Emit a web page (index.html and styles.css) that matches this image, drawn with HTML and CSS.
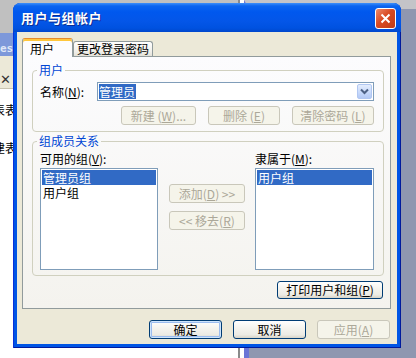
FILE: index.html
```html
<!DOCTYPE html>
<html lang="zh-CN">
<head>
    <meta charset="UTF-8">
    <title>用户与组帐户</title>
    <link rel="stylesheet" href="styles.css">
</head>
<body>
    <!-- 背后的程序窗口和桌面 -->
    <div class="backdrop">
        <div class="app">
            <div class="app-top"></div>
            <div class="app-title">ess:</div>
            <div class="app-tools"><span class="tool-x">✕</span></div>
            <div class="app-content">
                <div class="app-line">表表</div>
                <div class="app-line second">建表</div>
            </div>
        </div>
        <div class="app-gap"></div>
        <div class="desk"></div>
    </div>

    <div class="dialog">
        <div class="titlebar">
            <span class="title">用户与组帐户</span>
            <span class="close">
                <svg width="11" height="11" viewBox="0 0 11 11"><path d="M1.5 1.5 L9.5 9.5 M9.5 1.5 L1.5 9.5" stroke="#fff" stroke-width="2" fill="none"/></svg>
            </span>
        </div>

        <div class="dialog-body">
            <div class="tabs">
                <div class="tab active">用户</div>
                <div class="tab">更改登录密码</div>
            </div>

            <div class="panel">
                <fieldset class="group group-user">
                    <legend>用户</legend>
                    <div class="name-row">
                        <span class="label">名称(<u>N</u>):</span>
                        <div class="combo">
                            <span class="combo-text">管理员</span>
                            <span class="combo-btn">
                                <svg width="9" height="7" viewBox="0 0 9 7"><path d="M1 1.5 L4.5 5 L8 1.5" stroke="#4d6185" stroke-width="2" fill="none"/></svg>
                            </span>
                        </div>
                    </div>
                    <div class="btn-row">
                        <button class="btn disabled w-new">新建 (<u>W</u>)...</button>
                        <button class="btn disabled w-del">删除 (<u>E</u>)</button>
                        <button class="btn disabled w-clear">清除密码 (<u>L</u>)</button>
                    </div>
                </fieldset>

                <fieldset class="group group-member">
                    <legend>组成员关系</legend>
                    <div class="member-cols">
                        <div class="col col-left">
                            <div class="label">可用的组(<u>V</u>):</div>
                            <div class="listbox">
                                <div class="item selected">管理员组</div>
                                <div class="item">用户组</div>
                            </div>
                        </div>
                        <div class="col col-mid">
                            <button class="btn disabled">添加(<u>D</u>) &gt;&gt;</button>
                            <button class="btn disabled">&lt;&lt; 移去(<u>R</u>)</button>
                        </div>
                        <div class="col col-right">
                            <div class="label">隶属于(<u>M</u>):</div>
                            <div class="listbox">
                                <div class="item selected">用户组</div>
                            </div>
                        </div>
                    </div>
                </fieldset>

                <button class="btn print-btn">打印用户和组(<u>P</u>)</button>
            </div>

            <div class="footer">
                <button class="btn default">确定</button>
                <button class="btn">取消</button>
                <button class="btn disabled">应用(<u>A</u>)</button>
            </div>
        </div>
    </div>
</body>
</html>
```

FILE: styles.css
```css
* {
    margin: 0;
    padding: 0;
    box-sizing: border-box;
}

body {
    width: 416px;
    height: 358px;
    overflow: hidden;
    position: relative;
    background: #ffffff;
    font-family: "Noto Sans CJK SC", "Noto Sans", sans-serif;
    font-size: 12px;
    line-height: 14px;
    color: #000000;
}

u {
    text-decoration: underline;
    text-underline-offset: 1px;
}

/* 背景 */
.backdrop {
    display: flex;
    height: 100%;
}

.app {
    width: 240px;
    display: flex;
    flex-direction: column;
    border-right: 2px solid #8a8a8a;
}

.app-top {
    height: 33px;
    background: #c0c0c0;
}

.app-title {
    height: 23px;
    background: #7d98da;
    color: #dfe6f6;
    font-family: "DejaVu Sans Mono", monospace;
    font-weight: bold;
    font-size: 11px;
    line-height: 14px;
    padding-top: 9px;
}

.app-tools {
    height: 33px;
    background: #ece9d8;
    border-bottom: 1px solid #c8c4b0;
    padding-top: 16px;
}

.tool-x {
    font-size: 13px;
    color: #333;
}

.app-content {
    flex: 1;
    padding-top: 14px;
}

.app-line {
    margin-left: -7px;
}

.app-line.second {
    margin-top: 24px;
}

.app-gap {
    width: 4px;
    background: #ffffff;
}

.desk {
    flex: 1;
    background: #8f97b0;
    border-top: 9px solid #c4c4c8;
    border-left: 5px solid #6a74d6;
}

/* 对话框 */
.dialog {
    position: absolute;
    left: 13px;
    top: 3px;
    width: 388px;
    height: 345px;
    display: flex;
    flex-direction: column;
    background: #0055e5;
    border-radius: 8px 8px 0 0;
    padding: 0 4px 4px 4px;
    box-shadow: inset 1px 0 #0831d9, inset -1px 0 #001a9c, inset 0 -1px #001a9c;
}

.titlebar {
    height: 29px;
    margin: 0 -4px;
    padding: 0 5px 0 8px;
    display: flex;
    align-items: center;
    justify-content: space-between;
    border-radius: 7px 7px 0 0;
    background: linear-gradient(#3d8ffa 0, #0b64ef 3px, #0058ee 9px, #0456e8 18px, #0052e0 25px, #0047cc 29px);
}

.title {
    color: #ffffff;
    font-weight: bold;
    font-size: 13px;
    letter-spacing: 0.5px;
    text-shadow: 1px 1px #0b2d93;
}

.close {
    width: 21px;
    height: 21px;
    margin-top: 1px;
    border: 1px solid #ffffff;
    border-radius: 3px;
    background: linear-gradient(135deg, #ec8a6c, #d94a22 45%, #c23c16);
    display: flex;
    align-items: center;
    justify-content: center;
}

.dialog-body {
    flex: 1;
    background: #ece9d8;
    padding: 6px 6px 0 5px;
    display: flex;
    flex-direction: column;
}

/* 选项卡 */
.tabs {
    display: flex;
    align-items: flex-end;
    height: 18px;
    position: relative;
    z-index: 1;
}

.tab {
    height: 15px;
    width: 80px;
    padding-left: 3px;
    border: 1px solid #919b9c;
    border-bottom: none;
    border-radius: 3px 3px 0 0;
    background: linear-gradient(#ffffff, #f0efe9 70%, #e3e1d8);
    line-height: 14px;
}

.tab.active {
    height: 19px;
    width: 51px;
    padding-left: 7px;
    padding-top: 1px;
    margin-bottom: -1px;
    background: #fcfcfe;
    border-top: 1px solid #e68b2c;
    box-shadow: inset 0 2px #ffc73c;
    line-height: 17px;
}

.panel {
    height: 253px;
    border: 1px solid #919b9c;
    background: linear-gradient(#fcfcfe, #f4f3ee);
    padding: 6px 6px 0 9px;
    display: flex;
    flex-direction: column;
}

/* 分组框 */
.group {
    border: 1px solid #d0d0bf;
    border-radius: 4px;
    min-width: 0;
}

.group legend {
    color: #0046d5;
    margin-left: -3px;
    padding: 0 2px;
    line-height: 14px;
}

.group-user {
    padding: 5px 9px 6px 7px;
}

.name-row {
    display: flex;
    align-items: center;
}

.label {
    width: 57px;
    flex: none;
}

.combo {
    flex: 1;
    height: 19px;
    border: 1px solid #7f9db9;
    background: #ffffff;
    padding: 1px;
    display: flex;
    align-items: center;
    justify-content: space-between;
}

.combo-text {
    background: #316ac5;
    color: #ffffff;
    padding: 0 1px 0 0;
    height: 15px;
    line-height: 15px;
}

.combo-btn {
    width: 15px;
    height: 15px;
    border: 1px solid #b1c7f2;
    border-radius: 2px;
    background: linear-gradient(#e4edfd, #c6d8fb 60%, #b3c9f5);
    display: flex;
    align-items: center;
    justify-content: center;
}

.btn-row {
    display: flex;
    justify-content: flex-end;
    gap: 12px;
    margin-top: 5px;
}

/* 按钮 */
.btn {
    height: 19px;
    width: 73px;
    font: inherit;
    line-height: 14px;
    color: #000000;
    border: 1px solid #003c74;
    border-radius: 3px;
    background: linear-gradient(#ffffff, #f5f4ef 40%, #ecebe4 80%, #d8d4c8);
    text-align: center;
    white-space: nowrap;
}

.btn.disabled {
    color: #aca899;
    border-color: #c9c7ba;
    background: #f5f4ea;
}

.btn.default {
    box-shadow: inset 0 0 0 1px #cde4fc, inset 0 0 0 2px #9bbcef;
}

.w-new {
    width: 75px;
}

.w-del {
    width: 72px;
}

.w-clear {
    width: 82px;
}

.group-member {
    margin-top: 2px;
    padding: 4px 8px 5px 7px;
}

.member-cols {
    display: flex;
}

.col-left {
    width: 118px;
}

.col-right {
    width: 119px;
    margin-left: 10px;
}

.col-mid {
    width: 76px;
    margin-left: 11px;
    padding-top: 32px;
    display: flex;
    flex-direction: column;
    gap: 8px;
}

.col-mid .btn {
    width: 76px;
}

.col .label {
    width: auto;
    margin-bottom: 2px;
}

.listbox {
    height: 102px;
    border: 1px solid #7f9db9;
    background: #ffffff;
    padding: 1px;
}

.item {
    height: 15px;
    line-height: 15px;
    padding-left: 1px;
}

.item.selected {
    background: #316ac5;
    color: #ffffff;
}

.print-btn {
    width: 106px;
    height: 18px;
    align-self: flex-end;
    margin-top: 5px;
    margin-right: 1px;
}

.footer {
    display: flex;
    justify-content: flex-end;
    gap: 11px;
    margin-top: 11px;
    padding-right: 1px;
}
```
